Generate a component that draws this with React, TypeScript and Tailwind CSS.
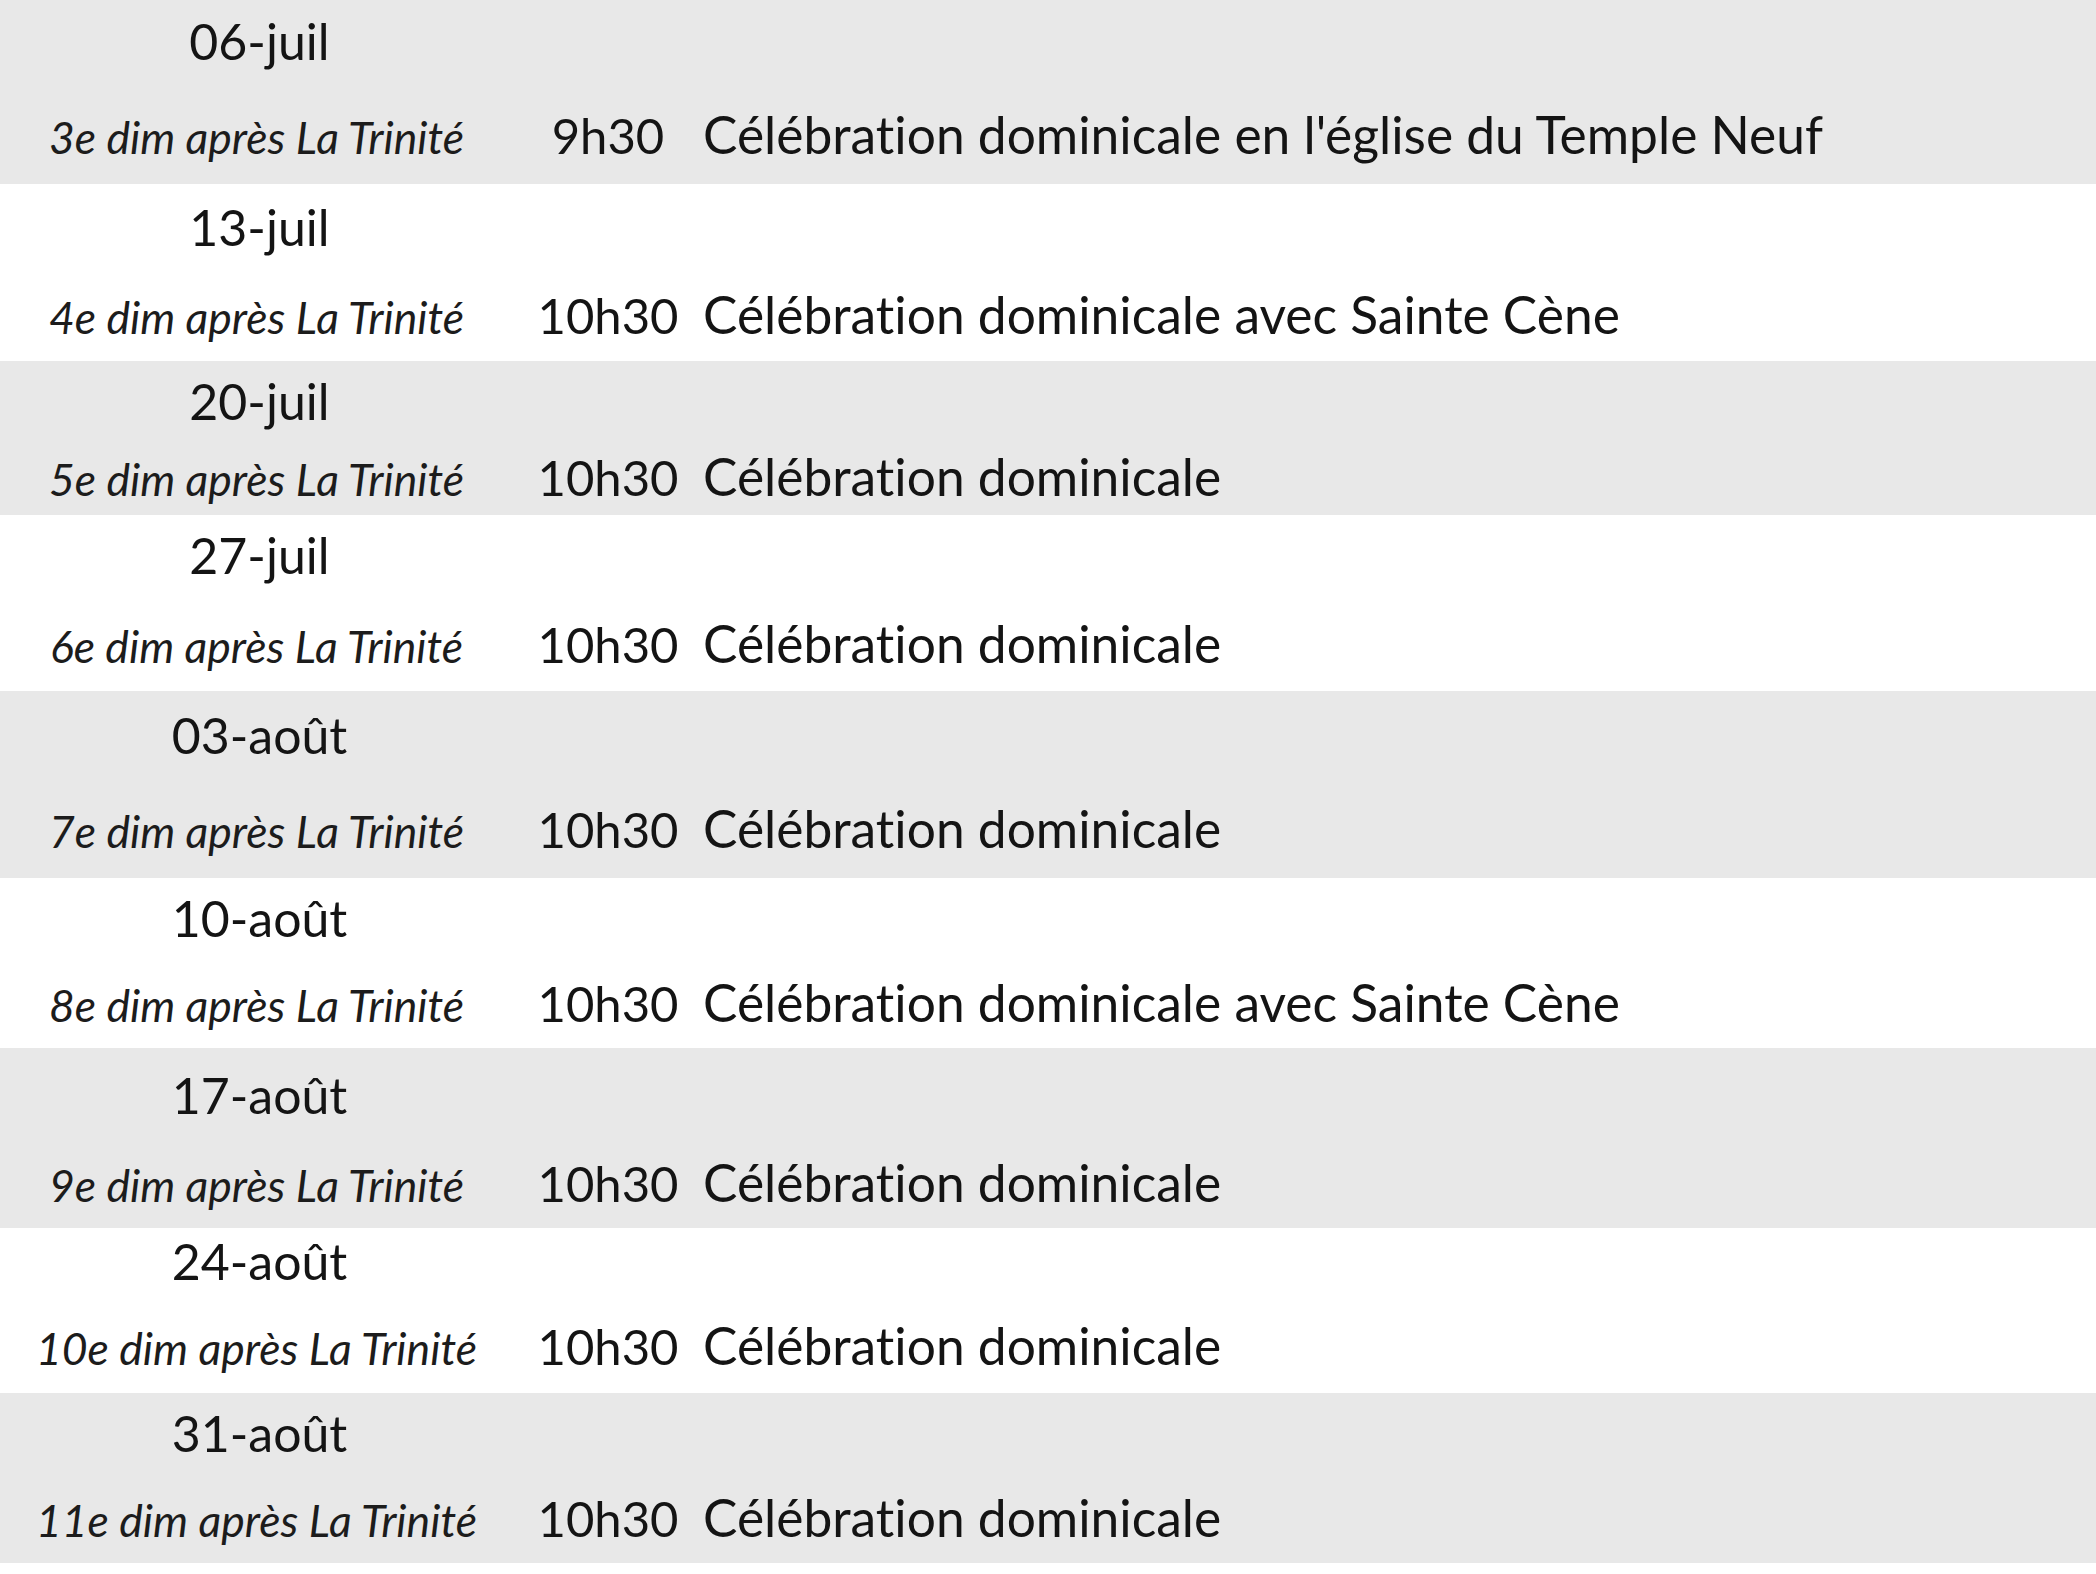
import React from 'react'

type Service = {
  date: string
  sunday: string
  time: string
  label: string
  box: string
}

// row heights and paddings follow the source sheet, which is not quite regular
const services: Service[] = [
  { date: '06-juil', sunday: '3e dim après La Trinité', time: '9h30', label: "Célébration dominicale en l'église du Temple Neuf", box: 'h-[184px] pt-[16px] pb-[24px]' },
  { date: '13-juil', sunday: '4e dim après La Trinité', time: '10h30', label: 'Célébration dominicale avec Sainte Cène', box: 'h-[177px] pt-[18px] pb-[21px]' },
  { date: '20-juil', sunday: '5e dim après La Trinité', time: '10h30', label: 'Célébration dominicale', box: 'h-[154px] pt-[15px] pb-[13px]' },
  { date: '27-juil', sunday: '6e dim après La Trinité', time: '10h30', label: 'Célébration dominicale', box: 'h-[176px] pt-[15px] pb-[22px]' },
  { date: '03-août', sunday: '7e dim après La Trinité', time: '10h30', label: 'Célébration dominicale', box: 'h-[187px] pt-[19px] pb-[24px]' },
  { date: '10-août', sunday: '8e dim après La Trinité', time: '10h30', label: 'Célébration dominicale avec Sainte Cène', box: 'h-[170px] pt-[15px] pb-[20px]' },
  { date: '17-août', sunday: '9e dim après La Trinité', time: '10h30', label: 'Célébration dominicale', box: 'h-[180px] pt-[22px] pb-[20px]' },
  { date: '24-août', sunday: '10e dim après La Trinité', time: '10h30', label: 'Célébration dominicale', box: 'h-[165px] pt-[8px] pb-[22px]' },
  { date: '31-août', sunday: '11e dim après La Trinité', time: '10h30', label: 'Célébration dominicale', box: 'h-[170px] pt-[15px] pb-[20px]' },
]

function ServiceRow({ service, shaded }: { service: Service; shaded: boolean }) {
  return (
    <div
      className={`flex flex-col justify-between ${service.box} ${
        shaded ? 'bg-[#e8e8e8]' : 'bg-white'
      }`}
    >
      <div className="w-[513px] pl-[6px] text-center text-[50px] leading-none">{service.date}</div>
      <div className="flex items-baseline">
        <div className="w-[513px] text-center text-[44.5px] italic leading-none text-[#1c1c1c]">
          {service.sunday}
        </div>
        <div className="w-[190px] text-center text-[49px] leading-none">{service.time}</div>
        <div className="text-[51.5px] leading-none whitespace-nowrap">{service.label}</div>
      </div>
    </div>
  )
}

export default function App() {
  return (
    <div className="min-h-screen w-full bg-white font-['Lato',sans-serif] text-[#141414] [font-variant-ligatures:none]">
      {services.map((service, i) => (
        <ServiceRow key={service.date} service={service} shaded={i % 2 === 0} />
      ))}
    </div>
  )
}
